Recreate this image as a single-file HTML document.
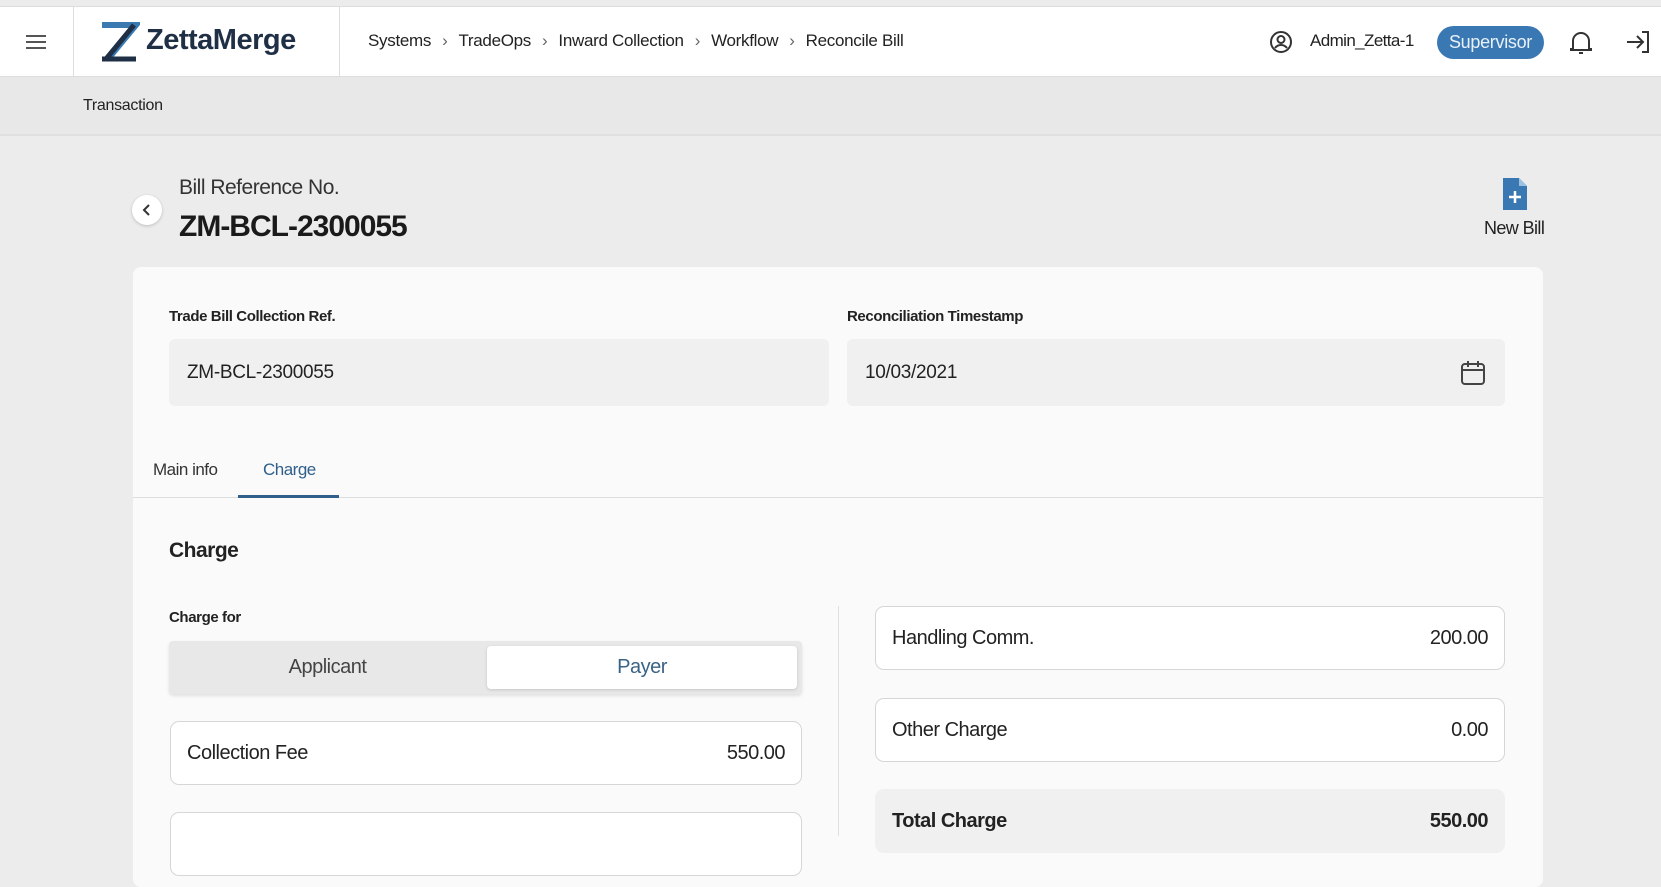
<!DOCTYPE html>
<html><head><meta charset="utf-8"><style>
*{box-sizing:border-box;margin:0;padding:0}
body{width:1661px;height:829px;overflow:hidden;background:#ececec;font-family:"Liberation Sans",sans-serif;color:#222;position:relative;letter-spacing:-0.3px}
.abs{position:absolute}
.hdr{left:0;top:6px;width:1661px;height:71px;background:#fff;border-top:1px solid #ddd;border-bottom:1px solid #ddd}
.bc{font-size:17px;color:#222;top:31px;left:368px;white-space:nowrap;letter-spacing:-0.3px}
.bc span{color:#666;margin:0 11px}
.tbar{left:0;top:77px;width:1661px;height:59px;background:#e8e8e8;border-bottom:2px solid #e0e0e0}
.card{left:133px;top:267px;width:1410px;height:620px;background:#fafafa;border-radius:8px}
.lbl{font-size:15px;font-weight:bold;color:#222;letter-spacing:-0.4px}
.inp{background:#f0f0f0;border-radius:6px;font-size:19px;padding-left:18px;line-height:67px}
.box{border:1.5px solid #d6d6d6;border-radius:9px;background:#fff;font-size:20px;display:flex;justify-content:space-between;align-items:center;padding:0 16px;letter-spacing:-0.5px}
</style></head><body>
<div class="abs hdr"></div>
<div class="abs" style="left:73px;top:7px;width:1px;height:70px;background:#ddd"></div>
<div class="abs" style="left:339px;top:7px;width:1px;height:70px;background:#ddd"></div>
<svg class="abs" style="left:25px;top:34px" width="22" height="16"><path d="M1 2h20M1 8h20M1 14h20" stroke="#555" stroke-width="2"/></svg>
<svg class="abs" style="left:98px;top:22px" width="42" height="40"><path d="M4 3h34L10 37" stroke="#3a7ab0" stroke-width="6" fill="none"/><path d="M4 37h34M36 3L8 37" stroke="#1f2f45" stroke-width="5" fill="none"/></svg>
<div class="abs" style="left:146px;top:24px;font-size:29px;color:#1f2f45;font-weight:bold;letter-spacing:-0.5px">ZettaMerge</div>
<div class="abs bc">Systems<span>›</span>TradeOps<span>›</span>Inward Collection<span>›</span>Workflow<span>›</span>Reconcile Bill</div>
<svg class="abs" style="left:1269px;top:30px" width="24" height="24"><circle cx="12" cy="12" r="10" stroke="#333" stroke-width="2" fill="none"/><circle cx="12" cy="9.5" r="3.5" stroke="#333" stroke-width="2" fill="none"/><path d="M6 18c3-4 9-4 12 0" stroke="#333" stroke-width="2" fill="none"/></svg>
<div class="abs" style="left:1310px;top:31px;font-size:17px;letter-spacing:-0.6px">Admin_Zetta-1</div>
<div class="abs" style="left:1437px;top:26px;width:107px;height:33px;background:#3a78b4;border-radius:17px;color:#e8f0f8;font-size:18px;text-align:center;line-height:33px">Supervisor</div>
<svg class="abs" style="left:1568px;top:29px" width="26" height="28"><path d="M5 20V12a8 8 0 0116 0v8h2v1H3v-1z" stroke="#333" stroke-width="2" fill="none"/><path d="M11 24h4" stroke="#333" stroke-width="2"/></svg>
<svg class="abs" style="left:1625px;top:30px" width="26" height="24"><path d="M2 12h15M12 6l6 6-6 6M17 2h6v20h-6" stroke="#333" stroke-width="2" fill="none"/></svg>
<div class="abs tbar"></div>
<div class="abs" style="left:83px;top:97px;font-size:16px">Transaction</div>
<div class="abs" style="left:132px;top:195px;width:30px;height:30px;border-radius:50%;background:#fff;box-shadow:0 1px 3px rgba(0,0,0,.2)"></div>
<svg class="abs" style="left:141px;top:203px" width="12" height="14"><path d="M8 2L3 7l5 5" stroke="#333" stroke-width="2" fill="none"/></svg>
<div class="abs" style="left:179px;top:176px;font-size:21px;color:#333;letter-spacing:-0.5px">Bill Reference No.</div>
<div class="abs" style="left:179px;top:210px;font-size:30px;font-weight:bold;color:#1a1a1a;letter-spacing:-1px">ZM-BCL-2300055</div>
<svg class="abs" style="left:1501px;top:176px" width="28" height="36"><path d="M2 2h16l8 8v24H2z" fill="#3a78b4"/><path d="M18 2v8h8" fill="#9cc0e0"/><path d="M14 15v12M8 21h12" stroke="#fff" stroke-width="2.5"/></svg>
<div class="abs" style="left:1484px;top:218px;font-size:18px;letter-spacing:-0.6px">New Bill</div>
<div class="abs card"></div>
<div class="abs lbl" style="left:169px;top:308px">Trade Bill Collection Ref.</div>
<div class="abs lbl" style="left:847px;top:308px">Reconciliation Timestamp</div>
<div class="abs inp" style="left:169px;top:339px;width:660px;height:67px">ZM-BCL-2300055</div>
<div class="abs inp" style="left:847px;top:339px;width:658px;height:67px">10/03/2021</div>
<svg class="abs" style="left:1460px;top:360px" width="26" height="26"><rect x="2" y="4" width="22" height="20" rx="3" stroke="#444" stroke-width="2" fill="none"/><path d="M2 10h22M8 1v6M18 1v6" stroke="#444" stroke-width="2"/></svg>
<div class="abs" style="left:153px;top:460px;font-size:17px;color:#333;letter-spacing:-0.5px">Main info</div>
<div class="abs" style="left:263px;top:460px;font-size:17px;color:#2f5f8a;letter-spacing:-0.5px">Charge</div>
<div class="abs" style="left:133px;top:497px;width:1410px;height:1px;background:#ddd"></div>
<div class="abs" style="left:238px;top:495px;width:101px;height:3px;background:#2f5f8a"></div>
<div class="abs" style="left:169px;top:539px;font-size:21px;font-weight:bold;letter-spacing:-0.5px">Charge</div>
<div class="abs lbl" style="left:169px;top:609px">Charge for</div>
<div class="abs" style="left:169px;top:641px;width:633px;height:53px;background:#e8e8e8;border-radius:4px;box-shadow:0 2px 3px rgba(0,0,0,.1)"></div>
<div class="abs" style="left:169px;top:656px;width:317px;text-align:center;font-size:20px;color:#444;letter-spacing:-0.5px">Applicant</div>
<div class="abs" style="left:487px;top:646px;width:310px;height:43px;background:#fff;border-radius:4px;box-shadow:0 1px 3px rgba(0,0,0,.15);text-align:center;line-height:43px;font-size:20px;color:#3a6486;letter-spacing:-0.5px">Payer</div>
<div class="abs box" style="left:170px;top:721px;width:632px;height:64px"><span>Collection Fee</span><span>550.00</span></div>
<div class="abs box" style="left:170px;top:812px;width:632px;height:64px"></div>
<div class="abs" style="left:838px;top:606px;width:1px;height:230px;background:#e0e0e0"></div>
<div class="abs box" style="left:875px;top:606px;width:630px;height:64px"><span>Handling Comm.</span><span>200.00</span></div>
<div class="abs box" style="left:875px;top:698px;width:630px;height:64px"><span>Other Charge</span><span>0.00</span></div>
<div class="abs box" style="left:875px;top:789px;width:630px;height:64px;background:#f0f0f0;border-color:#f0f0f0;font-weight:bold"><span>Total Charge</span><span>550.00</span></div>
</body></html>
